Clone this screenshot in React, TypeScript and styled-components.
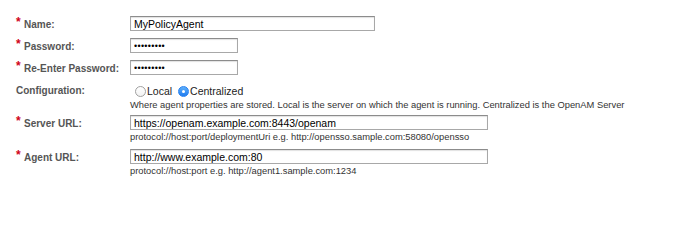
import styled, { createGlobalStyle } from 'styled-components';

const GlobalStyle = createGlobalStyle`
  body {
    margin: 0;
    background: #fff;
    font-family: "Liberation Sans", Arial, sans-serif;
  }
`;

interface FieldProps {
  label: string;
  required?: boolean;
  children: React.ReactNode;
  gap?: number;
  top?: boolean;
}

function Field({ label, required, children, gap = 3, top }: FieldProps) {
  return (
    <Row $gap={gap}>
      <Label $top={top}>
        {required ? <Star>*</Star> : null}
        {label}
      </Label>
      <Control>{children}</Control>
    </Row>
  );
}

export default function App() {
  return (
    <>
      <GlobalStyle />
      <Form>
        <Field label="Name:" required>
          <TextInput $width={245} defaultValue="MyPolicyAgent" />
        </Field>
        <Field label="Password:" required>
          <TextInput $width={108} type="password" defaultValue="abcdefghi" />
        </Field>
        <Field label="Re-Enter Password:" required>
          <TextInput $width={108} type="password" defaultValue="abcdefghi" />
        </Field>
        <Field label="Configuration:" gap={6} top>
          <Radios>
            <RadioOption>
              <Radio $checked={false} />
              Local
            </RadioOption>
            <RadioOption>
              <Radio $checked />
              Centralized
            </RadioOption>
          </Radios>
          <Hint $space={3}>
            Where agent properties are stored. Local is the server on which the agent is running.
            Centralized is the OpenAM Server
          </Hint>
        </Field>
        <Field label="Server URL:" required gap={0}>
          <TextInput $width={358} defaultValue="https://openam.example.com:8443/openam" />
          <Hint $space={2}>protocol://host:port/deploymentUri e.g. http://opensso.sample.com:58080/opensso</Hint>
        </Field>
        <Field label="Agent URL:" required gap={2}>
          <TextInput $width={358} defaultValue="http://www.example.com:80" />
          <Hint $space={2}>protocol://host:port e.g. http://agent1.sample.com:1234</Hint>
        </Field>
      </Form>
    </>
  );
}

const Form = styled.div`
  display: flex;
  flex-direction: column;
  padding-top: 13px;
`;

const Row = styled.div<{ $gap: number }>`
  display: grid;
  grid-template-columns: 130px 1fr;
  align-items: start;
  padding: ${({ $gap }) => `${$gap}px 0 4px`};
`;

const Label = styled.div<{ $top?: boolean }>`
  box-sizing: border-box;
  display: flex;
  align-items: ${({ $top }) => ($top ? 'flex-start' : 'center')};
  height: ${({ $top }) => ($top ? '12px' : '15px')};
  padding-left: 16px;
  padding-top: ${({ $top }) => ($top ? '0' : '2px')};
  font-size: 10px;
  line-height: 12px;
  font-weight: bold;
  color: #555;
  white-space: nowrap;
`;

const Star = styled.span`
  display: inline-block;
  width: 8px;
  margin-top: -5px;
  font-size: 12px;
  font-weight: bold;
  color: #d0021b;
`;

const Control = styled.div`
  display: flex;
  flex-direction: column;
  align-items: flex-start;
`;

const TextInput = styled.input<{ $width: number }>`
  box-sizing: border-box;
  width: ${({ $width }) => $width}px;
  height: 15px;
  margin: 0;
  padding: 0 3px;
  border: 1px solid #a8a8a8;
  border-top-color: #8c8c8c;
  box-shadow: inset 0 1px 1px rgba(0, 0, 0, 0.12);
  font-family: "Liberation Sans", Arial, sans-serif;
  font-size: 10.5px;
  color: #000;
  background: #fff;
  outline: none;

  &[type='password'] {
    font-size: 9px;
    letter-spacing: 0.3px;
  }
`;

const Radios = styled.div`
  display: flex;
  align-items: center;
  gap: 6px;
  height: 12px;
  padding-left: 5px;
`;

const RadioOption = styled.label`
  display: flex;
  align-items: center;
  gap: 1px;
  font-size: 10.5px;
  color: #222;
`;

const Radio = styled.span<{ $checked: boolean }>`
  box-sizing: border-box;
  position: relative;
  width: 11px;
  height: 11px;
  border-radius: 50%;
  border: 1px solid ${({ $checked }) => ($checked ? '#2a82f0' : '#a0a0a0')};
  background: ${({ $checked }) =>
    $checked ? 'linear-gradient(#5fb0fb, #1e7cf0)' : 'linear-gradient(#fff, #f2f2f2)'};

  &::after {
    content: '';
    display: ${({ $checked }) => ($checked ? 'block' : 'none')};
    position: absolute;
    left: 3px;
    top: 3px;
    width: 3px;
    height: 3px;
    border-radius: 50%;
    background: #fff;
  }
`;

const Hint = styled.div<{ $space?: number }>`
  margin-top: ${({ $space = 1 }) => $space}px;
  font-size: 9.35px;
  line-height: 11px;
  color: #333;
  white-space: nowrap;
`;
